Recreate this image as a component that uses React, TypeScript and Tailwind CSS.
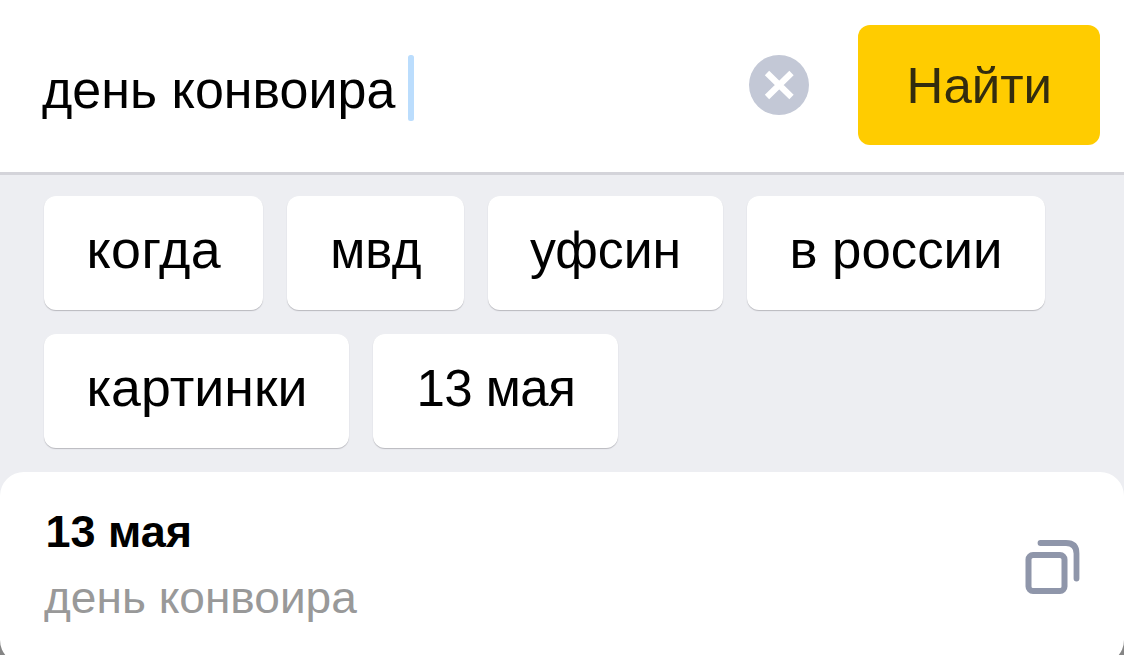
const rows = [
  [
    { label: 'когда', box: 'w-[219px]', text: 'scale-x-[1.055] tracking-[0.4px]' },
    { label: 'мвд', box: 'w-[177px]', text: 'tracking-[0px]' },
    { label: 'уфсин', box: 'w-[235px]', text: 'scale-x-[1.015]' },
    { label: 'в россии', box: 'w-[298px]', text: 'scale-x-[1.035]' },
  ],
  [
    { label: 'картинки', box: 'w-[305px]', text: 'scale-x-[1.053]' },
    { label: '13 мая', box: 'w-[245px]', text: 'tracking-[-0.5px]' },
  ],
];

function SearchBar() {
  return (
    <header className="flex h-[175px] items-start border-b-[3px] border-[#d4d4da] bg-white pr-[24px] pl-[42px]">
      <div className="flex flex-1 items-center pt-[55px]">
        <span className="origin-left scale-x-[1.02] pt-[6px] text-[51px] leading-[60px] whitespace-pre text-black">день конвоира</span>
        <span className="ml-[19px] h-[66px] w-[6px] rounded-[2.5px] bg-[#bbddfd]" />
      </div>
      <button className="mt-[55px] mr-[49px] size-[60px] rounded-full bg-[#c3c8d6]" aria-label="Очистить">
        <svg viewBox="0 0 60 60" className="size-full" fill="none" stroke="#fff" strokeWidth="6.2">
          <path d="M18 18 42.5 42M42.5 18 18 42" />
        </svg>
      </button>
      <button className="mt-[25px] h-[120px] w-[242px] rounded-[12px] bg-[#ffcc00] pt-px text-[50px] leading-[120px] text-[#332c0e]">
        <span className="inline-block scale-x-[1.02]">Найти</span>
      </button>
    </header>
  );
}

function CopyIcon() {
  return (
    <svg viewBox="0 0 56 56" className="size-14" fill="none" stroke="#8f96aa" strokeWidth="6">
      <rect x="4.5" y="16" width="36" height="36" rx="4.5" />
      <path d="M16.5 4H42Q52.5 4 52.5 14.5V39.5" strokeLinecap="round" strokeWidth="5.8" />
    </svg>
  );
}

export default function App() {
  return (
    <div className="flex h-[655px] w-[1124px] flex-col overflow-hidden bg-[#edeef2] font-['Liberation_Sans',Arial,sans-serif]">
      <SearchBar />
      <div className="flex h-[297px] shrink-0 flex-col gap-6 pt-[21px] pl-[44.4px]">
        {rows.map((row, i) => (
          <div key={i} className="flex gap-6">
            {row.map((chip) => (
              <button
                key={chip.label}
                className={`${chip.box} h-[114px] rounded-[12px] bg-white pb-[4px] text-[51px] whitespace-nowrap text-black shadow-[0_1px_1px_#b8b8be]`}
              >
                <span className={`inline-block ${chip.text}`}>{chip.label}</span>
              </button>
            ))}
          </div>
        ))}
      </div>
      <div className="h-[183px] shrink-0 bg-[linear-gradient(#edeef2_50%,#858585_50%)]">
        <div className="flex h-[192px] items-start justify-between rounded-[24px] bg-white pr-[44px] pl-[44px]">
          <div className="pt-[34px]">
            <div className="pl-[1.5px] text-[45px] leading-[52px] font-bold text-black">13 мая</div>
            <div className="mt-[14px] origin-left scale-x-[1.023] text-[45px] leading-[52px] text-[#999]">день конвоира</div>
          </div>
          <div className="pt-[67px]">
            <CopyIcon />
          </div>
        </div>
      </div>
    </div>
  );
}
